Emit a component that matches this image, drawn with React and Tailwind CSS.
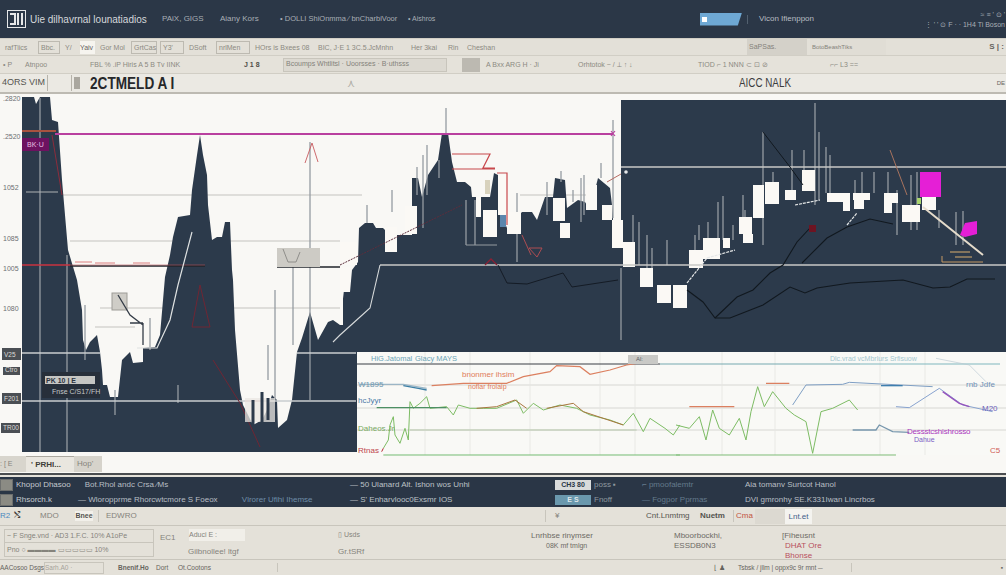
const darkSilhouette = `22,97 34,97 36,104 40,97 50,97 52,120 58,122 62,180 68,250 77,280 82,310 83,340 86,350 90,342 97,335 100,352 102,370 103,385 107,385 110,397 118,397 122,360 130,352 133,363 143,362 143,348 155,347 160,335 165,277 170,255 173,237 178,217 190,215 192,190 197,155 200,135 203,155 207,175 208,205 212,240 217,237 222,237 225,222 230,222 232,270 233,280 235,330 240,390 243,405 253,425 262,420 267,410 272,395 277,400 278,428 287,420 292,400 297,352 302,338 310,312 318,340 328,322 333,320 340,325 344,290 350,292 352,270 358,262 359,228 365,223 373,223 376,228 383,228 385,230 397,235 412,235 412,178 418,178 422,197 428,175 438,160 442,133 448,133 452,162 457,182 465,182 471,187 472,197 490,197 494,173 498,175 499,210 507,228 522,212 532,212 537,220 545,197 553,197 555,178 565,180 567,208 578,200 585,202 590,210 598,178 610,188 612,205 613,220 621,220 621,100 1006,100 1006,352 357,352 357,452 22,452`;

const candles = [
  [340, 242, 17, 23], [340, 267, 10, 25], [340, 292, 3, 33], [385, 227, 12, 25], [405, 206, 12, 28],
  [483, 210, 14, 27], [476, 197, 5, 20], [498, 175, 9, 40], [507, 212, 14, 22], [553, 198, 12, 23], [560, 223, 10, 15],
  [586, 185, 11, 25], [602, 205, 10, 15], [612, 220, 11, 28], [623, 242, 12, 25], [640, 268, 13, 19],
  [657, 285, 14, 18], [673, 285, 14, 23], [689, 250, 14, 18], [703, 238, 17, 21], [723, 238, 7, 10],
  [739, 217, 13, 17], [743, 234, 10, 9], [753, 185, 11, 33], [765, 182, 14, 22], [785, 190, 11, 10],
  [802, 170, 13, 21], [827, 193, 23, 9], [843, 193, 7, 18], [853, 193, 17, 7], [854, 198, 10, 11],
  [884, 193, 14, 10], [884, 202, 8, 11], [902, 205, 18, 17], [922, 197, 14, 13],
];

const wicks = [
  [446, 108, 133], [392, 190, 212], [367, 205, 223], [417, 167, 195], [423, 155, 228], [427, 145, 195],
  [439, 160, 178], [466, 200, 245], [475, 200, 245], [517, 193, 262], [547, 182, 215], [561, 171, 182], [573, 190, 202], [581, 178, 222],
  [584, 175, 215], [601, 163, 178], [613, 120, 218], [621, 268, 340], [633, 215, 242], [639, 222, 265],
  [647, 235, 268], [652, 248, 268], [667, 240, 265], [695, 235, 250], [699, 225, 240], [708, 222, 238],
  [718, 202, 238], [723, 196, 240], [733, 225, 240], [743, 195, 217], [745, 210, 224], [763, 132, 245],
  [773, 172, 182], [792, 150, 190], [804, 150, 170], [815, 103, 205], [819, 132, 200], [826, 147, 193],
  [830, 155, 193], [855, 180, 193], [862, 172, 193], [874, 172, 193], [888, 172, 193], [897, 190, 235],
  [911, 175, 230], [917, 172, 230], [939, 210, 228], [956, 212, 245], [963, 211, 245],
  [40, 98, 452], [67, 255, 452], [115, 390, 415], [85, 305, 360], [150, 318, 350],
  [178, 385, 403], [310, 142, 400], [293, 267, 345], [275, 290, 400], [268, 345, 380],
];

const axisLabels = [
  ['.2820', 101], ['.2520', 139], ['1052', 190], ['1085', 241], ['1005', 271], ['1080', 311],
];

const axisBadges = [
  [2, 348, 19, 12, 'V25'], [3, 367, 17, 8, 'Ctro'], [2, 393, 19, 11, 'F201'], [1, 423, 19, 10, 'TR00'],
];

function MarketChart() {
  return (
    <svg viewBox="0 94 1006 362" className="block h-[362px] w-full" fill="none">
      <rect x="0" y="94" width="1006" height="362" fill="#f9f8f5" />

      {/* grid on the light part of the price pane */}
      <g stroke="#c4c3bf" strokeWidth="1">
        <path d="M60 195H362M70 241H340M520 195H600M100 308H345M95 327H135" />
      </g>

      <polygon points={darkSilhouette} fill="#2c3a4b" />

      <g stroke="#959ba1" strokeWidth="1.3">
        {wicks.map(([x, y1, y2]) => (
          <line key={`${x}-${y1}`} x1={x} x2={x} y1={y1} y2={y2} />
        ))}
      </g>

      {candles.map(([x, y, w, h]) => (
        <rect key={`${x}-${y}`} x={x} y={y} width={w} height={h} fill="#fbf9f5" />
      ))}
      <rect x="500" y="215" width="6" height="12" fill="#5b86ad" />
      <rect x="485" y="180" width="5" height="14" fill="#d8d2bd" />
      <path d="M466 245H497" stroke="#959ba1" strokeWidth="1" />

      {/* level lines */}
      <path d="M621 167H1006" stroke="#c9c9c6" strokeWidth="1.5" />
      <path d="M380 265H1006" stroke="#c9c9c6" strokeWidth="1.5" />
      <path d="M22 265H70" stroke="#c8333f" strokeWidth="1.5" />
      <path d="M70 266H205M277 267H340" stroke="#20242b" strokeWidth="1.5" />
      <path d="M205 265H70" stroke="#b9555b" strokeWidth="0.6" />
      <path d="M22 353H100M297 353H356M22 401H356" stroke="#c9cdcf" strokeWidth="1.3" />
      <path d="M55 134H613" stroke="#b9409f" strokeWidth="2" />
      <path d="M22 131H56" stroke="#a8523f" strokeWidth="2" />
      <path d="M26 192H58" stroke="#aeb2b4" strokeWidth="1" />
      <path d="M611 131L615 136M615 131L611 136" stroke="#b9409f" strokeWidth="1.2" />

      {/* pink tag and left annotations */}
      <rect x="22" y="138" width="27" height="13" fill="#6d1260" />
      <text x="27" y="147" fontSize="7" fill="#e8bfe0">BK·U</text>
      <path d="M52 135L62 195" stroke="#8c2c3c" strokeWidth="1" />
      <rect x="112" y="293" width="15" height="17" fill="#cfcdc7" stroke="#9e9c97" />
      <path d="M118 295L130 315L143 325M130 323H143M143 323V345" stroke="#343c47" strokeWidth="1.3" />
      <path d="M192 232L178 285L170 320L157 348H137" stroke="#dfe2e2" strokeWidth="1.2" />
      <path d="M192 327H210L200 285ZM213 360L240 403L260 447" stroke="#6f2634" strokeWidth="1" />
      <rect x="277" y="248" width="43" height="19" fill="#cdcbc5" />
      <path d="M283 249L288 262H296L300 252" stroke="#8f8e8a" strokeWidth="1" />
      <path d="M305 163L312 143L318 162" stroke="#c85a5f" strokeWidth="0.9" />
      <path d="M42 372H100V398H42Z" fill="#272f3a" />
      <rect x="45" y="376" width="50" height="8" fill="#c5c5c2" />
      <text x="46" y="383" fontSize="7" fontWeight="700" fill="#2b3340">PK 10 | E</text>
      <text x="52" y="394" fontSize="7" fill="#c5c7c8">Fnse C/S17/FH</text>
      <path d="M245 401L262 401" stroke="#d27373" strokeWidth="0.6" />
      <path d="M75 262L92 262M95 263H115M133 263H150" stroke="#dd7f7f" strokeWidth="1" />
      <path d="M245 398H275V422H245Z" fill="#e9e7e2" opacity="0.75" />
      <path d="M253 400V425M262 392V425M268 398V420" stroke="#2c3a4b" strokeWidth="3" />

      {/* red construction over the middle of the chart */}
      <path d="M452 154H490L483 168H495M452 169H495M497 173H507V225" stroke="#c8484c" strokeWidth="1.2" />
      <path d="M340 265L462 205" stroke="#5c2d3c" strokeWidth="1" strokeDasharray="2 1" />
      <path d="M485 265L491 259L497 265" stroke="#8a2034" strokeWidth="1.3" />
      <path d="M529 248L537 257L542 248ZM522 235L531 255" stroke="#ad4d52" strokeWidth="1" />
      <path d="M498 265L507 283L527 284L563 273L572 287L618 280" stroke="#141b25" strokeWidth="1" />
      <path d="M380 265L370 308L360 317L340 335L333 342" stroke="#d7dadb" strokeWidth="1.1" />
      <path d="M607 182L621 174" stroke="#b66a62" strokeWidth="1" />
      <circle cx="626" cy="172" r="1.8" fill="#e5e7e8" />

      {/* right pane studies */}
      <path
        d="M687 290L703 302L715 318L730 318L763 305L790 287L805 293L817 288L850 283L903 280L933 288L950 287L967 279L995 279"
        stroke="#11181f"
        strokeWidth="1.1"
      />
      <path
        d="M715 318L737 297L753 290L770 273L783 265L797 242L810 228M802 263L827 238L847 227L870 219L893 224"
        stroke="#11181f"
        strokeWidth="1.1"
      />
      <path d="M763 132L790 167L803 185" stroke="#11181f" strokeWidth="1" />
      <path d="M687 283L707 258L735 250M795 205L820 200M847 225L857 213" stroke="#e6e8e8" strokeWidth="1.2" strokeDasharray="3 1" />
      <rect x="809" y="225" width="7" height="7" fill="#6d1422" />
      <path d="M890 150L907 195" stroke="#a8735e" strokeWidth="1" />
      <path d="M923 207L983 255" stroke="#e5dccb" strokeWidth="2" />
      <path d="M942 256V262H983" stroke="#c49865" strokeWidth="1" />
      <path d="M950 252H970M955 257H972" stroke="#d9ad6e" strokeWidth="1.2" />
      <rect x="920" y="172" width="21" height="25" fill="#e51fd6" />
      <polygon points="960,235 965,223 977,221 977,234 965,237" fill="#e51fd6" />
      <rect x="917" y="198" width="4" height="6" fill="#a9d46d" />

      {/* lower pane */}
      <rect x="357" y="352" width="649" height="103" fill="#f9f9f6" />
      <path d="M357 385H1006M357 408H1006M357 430H1006" stroke="#cfcfcb" strokeWidth="0.8" />
      <path d="M425 352V455M470 352V455M530 352V455M600 352V455M635 352V455M722 352V455M775 352V455M880 352V455M925 352V455" stroke="#e6e6e2" strokeWidth="0.8" />
      <path d="M357 364H660" stroke="#3b3f44" strokeWidth="1.2" />
      <path d="M660 364H860" stroke="#77aab0" strokeWidth="1.1" />
      <path d="M860 364H1000" stroke="#80b7bd" strokeWidth="1.1" />
      <g transform="translate(350 345) scale(0.3333)">
        <path
          d="M245 122L340 115L470 115L520 95L600 80L620 62L690 65L720 88L780 75L830 60L860 55"
          stroke="#dc8060"
          strokeWidth="3.5"
        />
        <path d="M30 118H160L230 130" stroke="#9cb6c6" strokeWidth="4" />
        <path d="M160 122L205 130L230 135" stroke="#3c7fa5" strokeWidth="4" />
        <path
          d="M100 310L115 285L120 240L130 215L135 270L150 295L165 250L175 285L180 170L190 190L210 175L230 155L240 190L290 185L310 210L325 180L360 190L400 190L440 190L500 165L520 205L550 175L580 195L630 180L680 190L720 210L780 225L820 240L850 205L880 260L900 220L945 250L970 270L990 240"
          stroke="#7cbc63"
          strokeWidth="3"
        />
        <path d="M380 190L440 185L495 165L530 190M590 190L670 175L700 200L820 240" stroke="#a9753e" strokeWidth="3" />
        <path d="M80 188H290" stroke="#4d9063" strokeWidth="4" />
        <path d="M100 330H990" stroke="#74bd72" strokeWidth="3" />
        <path d="M180 255H860" stroke="#b7c7ab" strokeWidth="3" />
        <path d="M95 320L100 310" stroke="#b7222f" strokeWidth="3" />
      </g>
      <g transform="translate(676 345) scale(0.3333)">
        <path
          d="M0 240L40 250L70 215L90 285L110 195L130 250L160 270L190 220L210 285L225 200L245 125L265 185L290 140L330 190L355 210L390 230L410 325L435 200L470 190L520 165L545 195"
          stroke="#7cbc63"
          strokeWidth="3"
        />
        <path d="M40 185H175M270 115H340" stroke="#dc8060" strokeWidth="4" />
        <path d="M350 180L390 120L500 118L520 112L770 125" stroke="#7e9fc4" strokeWidth="3" />
        <path d="M615 122H680" stroke="#3f7fae" strokeWidth="4" />
        <path d="M660 185L700 188L790 130L860 180L950 200" stroke="#88a3cf" strokeWidth="3" />
        <path d="M800 140L850 175L880 185" stroke="#9653bd" strokeWidth="4" />
        <path d="M530 255L600 255L610 240L650 260L700 262" stroke="#7797ad" strokeWidth="4" />
        <path d="M0 330H660" stroke="#7ebd75" strokeWidth="3" />
        <path d="M690 338H880" stroke="#c6c6c6" strokeWidth="3" />
        <path d="M890 338H960" stroke="#d46063" strokeWidth="4" />
        <path d="M780 40L880 60L930 110" stroke="#b9c9d2" strokeWidth="2" />
      </g>
      <text x="371" y="361" fontSize="7.5" fill="#6da5b6">HiG.Jatomal</text>
      <text x="415" y="361" fontSize="7.5" fill="#6da5b6">Glacy MAYS</text>
      <text x="462" y="377" fontSize="8" fill="#e07d5b">bnonmer ihsim</text>
      <text x="468" y="389" fontSize="7" fill="#e07d5b">noflar frolaip</text>
      <rect x="628" y="355" width="30" height="9" fill="#c9c9c6" />
      <text x="636" y="361" fontSize="6" fill="#5b5f64">Al:</text>
      <text x="358" y="387" fontSize="8" fill="#7098b0">W1895</text>
      <text x="358" y="403" fontSize="8" fill="#4e79a8">hcJyyr</text>
      <text x="358" y="431" fontSize="8" fill="#78a860">Daheos.Jr</text>
      <text x="358" y="453" fontSize="8" fill="#c0444c">Rtnas</text>
      <text x="830" y="361" fontSize="7" fill="#a4c7cf">Dlc.vrad vcMbrlurs Srfisuow</text>
      <text x="966" y="387" fontSize="8" fill="#6f90b6">rnb Jdfe</text>
      <text x="982" y="411" fontSize="8" fill="#6c62bb">M20</text>
      <text x="907" y="434" fontSize="8" letterSpacing="-0.2" fill="#a936bd">Dessstcshishrosso</text>
      <text x="914" y="442" fontSize="7" fill="#7b5ec4">Dahue</text>
      <text x="990" y="453" fontSize="8" fill="#d05d55">C5</text>

      {/* axis */}
      {axisLabels.map(([label, y]) => (
        <text key={label} x="3" y={y} fontSize="7" fill="#6d6f72">
          {label}
        </text>
      ))}
      {axisBadges.map(([x, y, w, h, label]) => (
        <g key={label}>
          <rect x={x} y={y} width={w} height={h} fill="#4b4f54" />
          <text x={x + 2} y={y + h - 3} fontSize="6.5" fill="#dddcd8">
            {label}
          </text>
        </g>
      ))}
    </svg>
  );
}

function Logo() {
  return (
    <svg width="19" height="18" viewBox="0 0 19 18" fill="none" className="shrink-0">
      <rect x="0.5" y="0.5" width="18" height="17" stroke="#e6e7e8" />
      <path d="M3 4H8V14H3M11 3V15M15 3V15" stroke="#e6e7e8" strokeWidth="2" />
    </svg>
  );
}

function ToolChip({ children, width, boxed }) {
  return (
    <span
      className={`inline-flex h-[13px] shrink-0 items-center whitespace-nowrap px-[2px] text-[7px] leading-none text-[#8c8a82] ${
        boxed ? 'border border-[#bdbab1]' : ''
      }`}
      style={{ width }}
    >
      {children}
    </span>
  );
}

const bandColumns = 'grid grid-cols-[16px_62px_272px_205px_87px_103px_1fr] items-center';

function BandRow({ a, b, b2, c, chip, chipClass, d, e, f }) {
  return (
    <div className={bandColumns}>
      <span className="h-[12px] w-[13px] border border-[#6d6f6e] bg-[#8b8b84]" />
      <span className="whitespace-nowrap text-[#c5cacf]">{a}</span>
      <span className="whitespace-nowrap text-[#b8bec4]">
        {b} <span className="ml-[22px] text-[#6f8ea8]">{b2}</span>
      </span>
      <span className="whitespace-nowrap text-[#bcc2c6]">{c}</span>
      <span className="flex items-center gap-[3px]">
        <span className={`h-[10px] w-[36px] text-center text-[7px] font-bold leading-[10px] ${chipClass}`}>{chip}</span>
        <span className="whitespace-nowrap text-[#8e989f]">{d}</span>
      </span>
      <span className="whitespace-nowrap text-[#647a8c]">{e}</span>
      <span className="whitespace-nowrap text-[#b8bec4]">{f}</span>
    </div>
  );
}

export default function App() {
  return (
    <div className="flex h-[575px] w-[1006px] flex-col overflow-hidden bg-[#e4e1d9] font-['Liberation_Sans',Arial,sans-serif]">
      {/* app header */}
      <header className="flex h-[38px] items-center bg-[#2b3747] pl-[7px]">
        <Logo />
        <span className="ml-[4px] w-[120px] shrink-0 whitespace-nowrap text-[10px] text-[#d5d8db]">
          Uie dilhavrnal lounatiadios
        </span>
        <span className="ml-[12px] w-[58px] shrink-0 text-[8px] text-[#a8aeb5]">PAiX, GIGS</span>
        <span className="w-[60px] shrink-0 text-[8px] text-[#a8aeb5]">Aiany Kors</span>
        <span className="w-[128px] shrink-0 whitespace-nowrap text-[7.5px] text-[#a8aeb5]">• DOLLI ShiOnmma ⁄ bnCharbiVoor</span>
        <span className="w-[292px] shrink-0 text-[7px] text-[#a8aeb5]">• Aishros</span>
        <span className="flex h-[13px] w-[42px] shrink-0 items-center bg-[#6ea8d4] pl-[2px] [clip-path:polygon(0_0,100%_0,90%_100%,0_100%)]">
          <span className="h-[5px] w-[5px] bg-white" />
        </span>
        <span className="ml-[5px] mr-[11px] h-[9px] w-px shrink-0 bg-[#52606f]" />
        <span className="w-[66px] shrink-0 whitespace-nowrap text-[8px] text-[#b8bdc2]">Vicon Ifienppon</span>
        <div className="flex flex-1 flex-col items-end pr-[1px] text-[7px] text-[#a8aeb5]">
          <span className="mb-[3px] leading-none">≈ ≡ ' ⊙ '</span>
          <span className="whitespace-nowrap leading-none">⋮ ' ' ⊙ F · · 1H4 Ti Boson</span>
        </div>
      </header>

      {/* ribbon row one */}
      <div className="flex h-[17px] items-center gap-[3px] border-t border-[#d1cec5] bg-[#e3e0d8] pl-[3px]">
        <ToolChip width={32}>rafTiics</ToolChip>
        <ToolChip width={22} boxed>Bbc.</ToolChip>
        <ToolChip width={14}>Y/</ToolChip>
        <span className="h-[13px] w-[15px] shrink-0 bg-[#f6f4ef] text-[7px] leading-[13px] text-[#66645e]">Yaiv</span>
        <ToolChip width={30}>Gor Mol</ToolChip>
        <ToolChip width={26} boxed>GrtCas</ToolChip>
        <ToolChip width={24} boxed>Y3'</ToolChip>
        <ToolChip width={26}>DSoft</ToolChip>
        <ToolChip width={34} boxed>nrlMen</ToolChip>
        <ToolChip width={60}>HOrs is Bxees 08</ToolChip>
        <ToolChip width={90}>BIC, J·E 1 3C.5.JcMnhn</ToolChip>
        <ToolChip width={34}>Her 3kai</ToolChip>
        <ToolChip width={16}>Rin</ToolChip>
        <ToolChip width={58}>Cheshan</ToolChip>
        <ToolChip width={218}> </ToolChip>
        <span className="flex h-[16px] w-[60px] shrink-0 items-center bg-[#d4d1c9] pl-[2px] text-[7px] text-[#84827b]">SaPSas.</span>
        <span className="flex h-[16px] w-[76px] shrink-0 items-center bg-[#e0ddd5] pl-[2px] text-[6px] text-[#84827b]">BotoBeashTiks</span>
        <span className="ml-auto pr-[2px] text-[8px] font-bold text-[#66645e]">S | :</span>
      </div>

      {/* ribbon row two */}
      <div className="flex h-[18px] items-center gap-[4px] border-t border-[#d1cec5] bg-[#e5e2da] pl-[1px]">
        <ToolChip width={18}>• P</ToolChip>
        <ToolChip width={61}>Atnpoo</ToolChip>
        <ToolChip width={150}>FBL % .iP Hiris A 5 B Tv IINK</ToolChip>
        <ToolChip width={24}>
          <b className="text-[#4f4e49]">J 1 8</b>
        </ToolChip>
        <span className="ml-[13px] flex h-[14px] w-[164px] shrink-0 items-center whitespace-nowrap border border-[#c8c5bc] bg-[#dcd9d1] px-[2px] text-[7px] text-[#84827b]">
          Bcoumps Whtlitsl · Uoorsses · B·uthsss
        </span>
        <span className="ml-[11px] h-[14px] w-[18px] shrink-0 bg-[#bcb9b1]" />
        <ToolChip width={88}>A Bxx ARG H · Ji</ToolChip>
        <ToolChip width={116}>Orhtotok ~ / ⟂ ↑ ↓</ToolChip>
        <ToolChip width={128}>TIOD ⌐ 1 NNN ⊂ ⊡ ⊘</ToolChip>
        <ToolChip width={60}>⌐⌐ L3 ==</ToolChip>
      </div>

      {/* title row */}
      <div className="flex h-[21px] items-center border-t border-[#d1cec5] border-b-[2px] border-b-[#bdbab2] bg-[#ebe9e3] pl-[2px]">
        <span className="w-[45px] shrink-0 whitespace-nowrap text-[9px] text-[#55544f]">4ORS VIM</span>
        <span className="h-[16px] w-[25px] shrink-0 border-x border-[#b6b3aa]" />
        <span className="ml-[2px] h-[12px] w-[6px] shrink-0 bg-[#aaa79f]" />
        <span className="ml-[10px] w-[92px] shrink-0 origin-left scale-x-[0.8] whitespace-nowrap text-[17px] font-bold leading-none text-[#26272a]">
          2CTMELD A I
        </span>
        <span className="ml-[165px] w-[12px] shrink-0 text-[11px] text-[#b0aea7]">⋏</span>
        <span className="ml-[380px] w-[54px] shrink-0 origin-left scale-x-[0.82] whitespace-nowrap text-[12px] text-[#3b3c3e]">AICC NALK</span>
        <span className="ml-auto pr-[1px] text-[6px] text-[#66645e]">DE</span>
      </div>

      <MarketChart />

      {/* pane tabs */}
      <div className="flex h-[19px] items-start border-b-[2px] border-b-[#4a4d50] bg-[#f9f8f5]">
        <span className="h-[16px] w-[26px] bg-[#d8d5cd] text-[7px] leading-[16px] text-[#85837c]">: [ E</span>
        <span className="h-[16px] w-[48px] border-t border-[#aaa79f] bg-[#e9e6df] pl-[5px] text-[8px] font-bold leading-[16px] text-[#3f3e3a]">
          ' PRHI...
        </span>
        <span className="h-[16px] w-[28px] bg-[#d6d3cb] pl-[3px] text-[8px] leading-[16px] text-[#85837c]">Hop'</span>
      </div>

      {/* status band */}
      <div className="mt-[2px] flex h-[30px] flex-col justify-around bg-[#2a3646] text-[8px] leading-none">
        <BandRow
          a="Khopol Dhasoo"
          b={'\u00a0\u00a0\u00a0Bot.Rhol andc Crsa ⁄Ms'}
          c="— 50 Ulanard Alt. Ishon wos Unhi"
          chip="CH3 80"
          chipClass="bg-[#d9dbdb] text-[#2a3646]"
          d="poss ▪"
          e="⌐ pmoofalemtr"
          f="Aia tomanv Surtcot Hanol"
        />
        <BandRow
          a="Rhsorch.k"
          b="— Wloropprme Rhorcwtcmore S Foeox"
          b2="Vlrorer Ufihi Ihemse"
          c="— S' Enharvlooc0Exsmr IOS"
          chip="E S"
          chipClass="bg-[#6a98ad] text-[#dfe7ea]"
          d="Fnoff"
          e="— Fogpor Pprmas"
          f="DVI gmronhy SE.K331Iwan Lincrbos"
        />
      </div>

      {/* bottom controls */}
      <div className="flex h-[19px] items-center border-b border-[#c8c5bc] bg-[#e4e1d9] text-[8px] text-[#85837c]">
        <span className="w-[14px] text-[#4b88bf]">R2</span>
        <span className="w-[26px] text-[#3f3e3a]">⤭</span>
        <span className="w-[35px]">MDO</span>
        <span className="w-[18px] bg-[#f2f0ea] text-center text-[7px] font-bold text-[#55544f]">Bnee</span>
        <span className="ml-[5px] w-[447px] border-l border-[#c8c5bc] pl-[7px]">EDWRO</span>
        <span className="w-[101px] border-l border-[#c8c5bc] pl-[9px]">¥</span>
        <span className="w-[54px] whitespace-nowrap text-[#55544f]">Cnt.Lnmtmg</span>
        <span className="w-[33px] font-bold text-[#55544f]">Nuetm</span>
        <span className="w-[22px] border-l border-[#c8c5bc] pl-[2px] text-[#c25441]">Cma</span>
        <span className="h-[15px] w-[30px] bg-[#dcd9d1]" />
        <span className="h-[15px] w-[27px] bg-[#f4f3ef] text-center leading-[15px] text-[#3f5f8a]">Lnt.et</span>
      </div>

      {/* instrument details */}
      <div className="flex h-[34px] items-start border-b border-[#c8c5bc] bg-[#e4e1d9] pt-[3px] text-[8px] text-[#85837c]">
        <div className="ml-[4px] w-[150px] border border-[#c8c5bc]">
          <div className="whitespace-nowrap px-[2px] text-[7px] leading-[12px]">~ F Snge.vnd · AD3 1.F.C. 10% A1oPe</div>
          <div className="whitespace-nowrap border-t border-[#c8c5bc] px-[2px] text-[7px] leading-[13px]">Pno ○ ▬▬▬▬ ▭▭▭▭▭ 10%</div>
        </div>
        <span className="ml-[6px] w-[29px] pt-[3px]">EC1</span>
        <div className="w-[149px]">
          <div className="h-[12px] w-[56px] bg-[#f1efe9] text-[7px] leading-[12px]">Aduci E :</div>
          <div className="ml-[-1px] mt-[6px] leading-[9px]">Gilbnollee! ltgf</div>
        </div>
        <div className="w-[193px]">
          <div className="h-[12px] text-[7px] leading-[12px]">▯ Usds</div>
          <div className="mt-[6px] leading-[9px]">Gr.tSRf</div>
        </div>
        <div className="w-[143px] pt-[2px] leading-[10px] text-[#6d6b65]">
          <div>Lnrhbse rinymser</div>
          <div className="pl-[15px] text-[7px]">08K mf tmlgn</div>
        </div>
        <div className="w-[108px] pt-[2px] leading-[10px] text-[#6d6b65]">
          <div>Mboorbockhi,</div>
          <div>ESSDB0N3</div>
        </div>
        <div className="w-[60px] pt-[2px] leading-[10px] text-[#6d6b65]">
          <div>[Fiheusnt</div>
          <div className="pl-[3px] text-[#b8505e]">DHAT Ore</div>
          <div className="pl-[3px] text-[#b8505e]">Bhonse</div>
        </div>
      </div>

      {/* status bar */}
      <div className="flex h-[15px] items-center bg-[#e4e1d9] text-[6.5px] text-[#66645e]">
        <span className="w-[44px] whitespace-nowrap">AACosoo Dsgs</span>
        <span className="h-[12px] w-[60px] border border-[#c8c5bc] text-[#a5a29a]">Sarh.A0 ·</span>
        <span className="ml-[14px] w-[38px] whitespace-nowrap font-bold">Bnenif.Ho</span>
        <span className="w-[22px]">Dort</span>
        <span className="w-[99px]">Ot.Cootons</span>
        <span className="w-[448px] border-l border-[#c8c5bc] text-right">⌊ ♟</span>
        <span className="ml-[13px] w-[113px] whitespace-nowrap">Tsbsk / jllm | oppx9c 9r mnt ─</span>
        <span className="flex-1 border-l border-[#c8c5bc] pr-[3px] text-right">▪</span>
      </div>
    </div>
  );
}
